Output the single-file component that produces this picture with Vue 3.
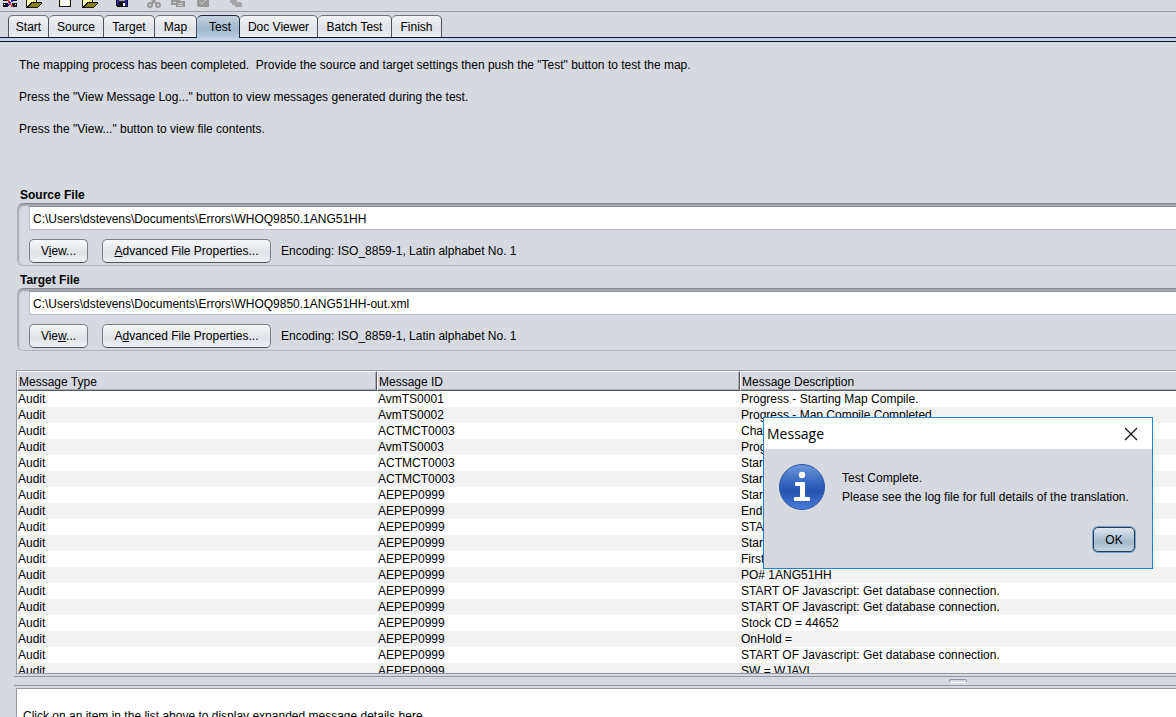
<script setup>
import { ref } from 'vue'

const tabs = [
  { name: 'Start', w: 41 }, { name: 'Source', w: 55 }, { name: 'Target', w: 51 }, { name: 'Map', w: 42 },
  { name: 'Test', w: 43 }, { name: 'Doc Viewer', w: 78 }, { name: 'Batch Test', w: 74 }, { name: 'Finish', w: 50 },
]
const active = ref('Test')
const open = ref(true)
const sourcePath = ref('C:\\Users\\dstevens\\Documents\\Errors\\WHOQ9850.1ANG51HH')
const targetPath = ref('C:\\Users\\dstevens\\Documents\\Errors\\WHOQ9850.1ANG51HH-out.xml')
const rows = [
  ['AvmTS0001', 'Progress - Starting Map Compile.'],
  ['AvmTS0002', 'Progress - Map Compile Completed.'],
  ['ACTMCT0003', 'Cha'],
  ['AvmTS0003', 'Prog'],
  ['ACTMCT0003', 'Start'],
  ['ACTMCT0003', 'Start'],
  ['AEPEP0999', 'Start'],
  ['AEPEP0999', 'End'],
  ['AEPEP0999', 'STA'],
  ['AEPEP0999', 'Start'],
  ['AEPEP0999', 'First'],
  ['AEPEP0999', 'PO# 1ANG51HH'],
  ['AEPEP0999', 'START OF Javascript: Get database connection.'],
  ['AEPEP0999', 'START OF Javascript: Get database connection.'],
  ['AEPEP0999', 'Stock CD = 44652'],
  ['AEPEP0999', 'OnHold ='],
  ['AEPEP0999', 'START OF Javascript: Get database connection.'],
  ['AEPEP0999', 'SW = WJAVL'],
]
</script>

<template>
  <div class="app">
    <div class="toolbar" aria-hidden="true">
      <svg width="250" height="11" viewBox="0 0 250 11" shape-rendering="crispEdges">
        <g>
          <path d="M3 0h5v1h-5zM3 3h5v4h-5z" fill="#111" />
          <path d="M12 0h5v1h-5zM12 3h5v4h-5z" fill="#111" />
          <path d="M7 0h2v1h-2zM8 1h2v2h-2zM9 3h2v2h-2zM11 5h2v2h-2z" fill="#d22" />
          <path d="M11 0h2v2h-2zM9 2h2v1h-2zM7 4h2v2h-2z" fill="#22c" />
          <path d="M4 4h1v1h-1zM15 4h1v1h-1z" fill="#fff" />
        </g>
        <g v-for="x in [26, 82]" :key="x" :transform="`translate(${x} 0)`">
          <path d="M0 0h11v2h5v1l-5 5h-11z" fill="#111" />
          <path d="M1 0h9v2h-4l-5 4z" fill="#ffffb0" />
          <path d="M6 3h9l-4 4h-9z" fill="#85850f" />
        </g>
        <path d="M59 0h12v7h-12z" fill="#111" />
        <path d="M60 0h10v6h-10z" fill="#fff" />
        <path d="M60 0h1v6h-1zM69 0h1v6h-1z" fill="#f5f0a0" />
        <path d="M116 0h12v7h-11l-1-1z" fill="#111" />
        <path d="M117 0h2v5h-2zM125 0h2v6h-2zM119 1h6v1h-6z" fill="#22229a" />
        <path d="M119 0h6v1h-6z" fill="#a8a820" />
        <path d="M123 3h2v3h-2z" fill="#fff" />
        <g fill="none" stroke="#999" stroke-width="2" shape-rendering="auto">
          <path d="M155 0l-3 4M152 0l5 4" />
          <circle cx="150" cy="5" r="2" />
          <circle cx="158" cy="5" r="2" />
        </g>
        <path d="M171 0h9v5h-9zM176 1h9v6h-9z" fill="#999" />
        <path d="M178 3h5v1h-5zM178 5h5v1h-5zM173 2h3v1h-3z" fill="#d0d0d0" />
        <path d="M197 0h12v6l-1 1h-10l-1-1z" fill="#999" />
        <path d="M200 2l2 2 4-4" fill="none" stroke="#ccc" shape-rendering="auto" />
        <path d="M230 0h7v2h3l2 2v3h-7v-2h-3v-2h-2z" fill="#a5a5a5" />
      </svg>
    </div>

    <nav class="tabs" role="tablist">
      <button v-for="t in tabs" :key="t.name" role="tab" :aria-selected="t.name === active"
        :class="['tab', { on: t.name === active }]" :style="{ width: t.w + 'px' }" @click="active = t.name">{{ t.name }}</button>
    </nav>
    <div class="band"></div>

    <main class="content">
      <div class="intro">
        <p>The mapping process has been completed.&nbsp; Provide the source and target settings then push the "Test" button to test the map.</p>
        <p>Press the "View Message Log..." button to view messages generated during the test.</p>
        <p>Press the "View..." button to view file contents.</p>
      </div>

      <section class="file">
        <label for="src">Source File</label>
        <div class="group">
          <input id="src" v-model="sourcePath" type="text" />
          <div class="actions">
            <button class="btn view">V<u>i</u>ew...</button>
            <button class="btn adv"><u>A</u>dvanced File Properties...</button>
            <span>Encoding: ISO_8859-1, Latin alphabet No. 1</span>
          </div>
        </div>
      </section>
      <section class="file">
        <label for="tgt">Target File</label>
        <div class="group">
          <input id="tgt" v-model="targetPath" type="text" />
          <div class="actions">
            <button class="btn view">Vie<u>w</u>...</button>
            <button class="btn adv">A<u>d</u>vanced File Properties...</button>
            <span>Encoding: ISO_8859-1, Latin alphabet No. 1</span>
          </div>
        </div>
      </section>

      <div class="log">
        <table>
          <colgroup><col class="c1" /><col class="c2" /><col /></colgroup>
          <thead>
            <tr><th>Message Type</th><th>Message ID</th><th>Message Description</th></tr>
          </thead>
          <tbody>
            <tr v-for="(r, i) in rows" :key="i"><td>Audit</td><td>{{ r[0] }}</td><td>{{ r[1] }}</td></tr>
          </tbody>
        </table>
      </div>
      <div class="divider"><span class="grip"></span></div>
      <div class="details">Click on an item in the list above to display expanded message details here.</div>
    </main>

    <div v-if="open" class="dialog" role="dialog" aria-labelledby="dlg-title">
      <header>
        <h2 id="dlg-title">Message</h2>
        <button class="close" aria-label="Close" @click="open = false">
          <svg width="14" height="14" viewBox="0 0 14 14"><path d="M1 1l12 12M13 1L1 13" stroke="#111" stroke-width="1.2" /></svg>
        </button>
      </header>
      <div class="body">
        <svg class="info" width="48" height="48" viewBox="0 0 48 48" aria-hidden="true">
          <defs>
            <linearGradient id="blue" x1="0" y1="0" x2="0" y2="1">
              <stop offset="0" stop-color="#6f97dc" />
              <stop offset=".45" stop-color="#2f62bd" />
              <stop offset=".6" stop-color="#2453b0" />
              <stop offset="1" stop-color="#4a7ddb" />
            </linearGradient>
          </defs>
          <circle cx="24" cy="24" r="22.5" fill="url(#blue)" stroke="#2b55a5" />
          <circle cx="24" cy="12" r="3.2" fill="#fff" />
          <path d="M18 19h8q1 0 1 1v14h4q1 0 1 1v2q0 1-1 1h-14q-1 0-1-1v-2q0-1 1-1h5v-11h-4q-1 0-1-1v-2q0-1 1-1z" fill="#fff" />
        </svg>
        <p>Test Complete.<br />Please see the log file for full details of the translation.</p>
      </div>
      <footer><button class="ok" @click="open = false">OK</button></footer>
    </div>
  </div>
</template>

<style>
html, body { margin: 0; background: #d6d9e0; }
</style>
<style scoped>
* { box-sizing: border-box; }
.app { position: relative; display: flex; flex-direction: column; height: 100vh; overflow: hidden; background: #d6d9e0; color: #000; font: 12px/16px "Liberation Sans", Arial, sans-serif; }
button, input { font: inherit; color: inherit; margin: 0; }
p, h2 { margin: 0; }
.toolbar { flex: none; height: 12px; border-bottom: 1px solid #9699a2; }
.toolbar svg { display: block; }
.tabs { flex: none; display: flex; height: 26px; padding: 3px 0 0 8px; border-bottom: 1px solid #10132a; }
.tab { height: 22px; padding: 0; white-space: nowrap; border: 1px solid #4d525c; border-top-color: #6d717a; border-bottom: 0; border-left-width: 0; border-radius: 5px 5px 0 0; background: linear-gradient(#f2f3f5, #dfe2e7 60%, #eceef1); }
.tab:first-child { border-left-width: 1px; }
.tab.on { height: 23px; padding-left: 4px; border-color: #1c2a3c; background: linear-gradient(#c3d2e0, #9fb8cd 60%, #b9cfe2); }
.band { flex: none; height: 4px; background: #c3d5e6; border-bottom: 1px solid #10132a; }
.content { flex: 1; min-height: 0; display: flex; flex-direction: column; padding-left: 16px; }
.intro { flex: none; display: flex; flex-direction: column; gap: 16px; padding: 15px 3px 51px; }
.file { flex: none; display: flex; flex-direction: column; }
.file label { padding: 0 4px; line-height: 15px; font-weight: bold; }
.group { height: 63px; margin: 0 0 7px 1px; border: 1px solid #b3b5ba; border-right: 0; border-top: 1px solid #85888e; border-radius: 6px 0 0 6px; box-shadow: inset 1px 2px 1px #a4a7ad; padding: 2px 0 0 11px; }
.group input { display: block; width: 100%; height: 24px; padding: 1px 3px 0; border: 1px solid #b9bcc2; border-top: 1px solid #8e9197; border-right: 0; background: #fff; outline: 0; }
.actions { display: flex; align-items: center; padding-top: 9px; }
.btn { height: 24px; padding: 0; border: 1px solid #7b7f86; border-bottom-color: #4e5258; border-radius: 5px; background: linear-gradient(#f7f8f9, #dfe2e7 60%, #eff1f4); white-space: nowrap; }
.view { width: 59px; margin-right: 14px; }
.adv { width: 169px; margin-right: 10px; }
.log { flex: 1; min-height: 0; margin-top: 12px; overflow: hidden; border: 1px solid #9297a1; border-right: 0; background: #fff; }
table { width: 100%; border-collapse: separate; border-spacing: 0; table-layout: fixed; }
.c1 { width: 360px; }
.c2 { width: 363px; }
th, td { padding: 0 1px; text-align: left; font-weight: normal; white-space: nowrap; overflow: hidden; }
th { height: 20px; padding: 1px 1px 0; background: #d6d9e0; border-top: 1px solid #fff; border-left: 1px solid #fff; border-right: 1px solid #55585f; border-bottom: 1px solid #55585f; box-shadow: inset -1px -1px #a8abb2; line-height: 16px; }
th:last-child { border-right: 0; box-shadow: inset 0 -1px #a8abb2; }
td { height: 16px; }
tbody tr:nth-child(even) { background: #f2f2f2; }
.divider { flex: none; display: flex; justify-content: center; align-items: center; height: 10px; margin: 2px 0 2px -2px; border: 1px solid #9297a1; border-width: 1px 0; padding-left: 726px; }
.grip { width: 18px; height: 4px; border: 1px solid #8e94a3; border-bottom-color: #fff; border-radius: 2px; }
.details { flex: none; height: 29px; padding: 19px 6px 0; border: 1px solid #9297a1; border-right: 0; border-bottom: 0; background: #fff; overflow: hidden; white-space: nowrap; }
.dialog { position: absolute; top: 417px; right: 23px; width: 390px; border: 1px solid #1e82d2; background: #d6d9e0; }
.dialog header { display: flex; align-items: center; justify-content: space-between; height: 31px; padding: 0 14px 0 3px; background: #fff; }
.dialog h2 { font: 14px/20px "Open Sans", "Noto Sans", sans-serif; }
.close { display: flex; padding: 0; border: 0; background: none; }
.body { display: flex; gap: 16px; padding: 14px 0 0 14px; }
.body p { padding-top: 6px; line-height: 19px; white-space: nowrap; }
footer { display: flex; justify-content: flex-end; padding: 16px 17px; }
.ok { width: 42px; height: 25px; padding: 0; border: 1px solid #2b3b4d; border-radius: 5px; background: linear-gradient(#dfe7ee, #a2b9cc 60%, #c3d6e6); box-shadow: 0 0 0 1px #73a4d1; }
</style>
